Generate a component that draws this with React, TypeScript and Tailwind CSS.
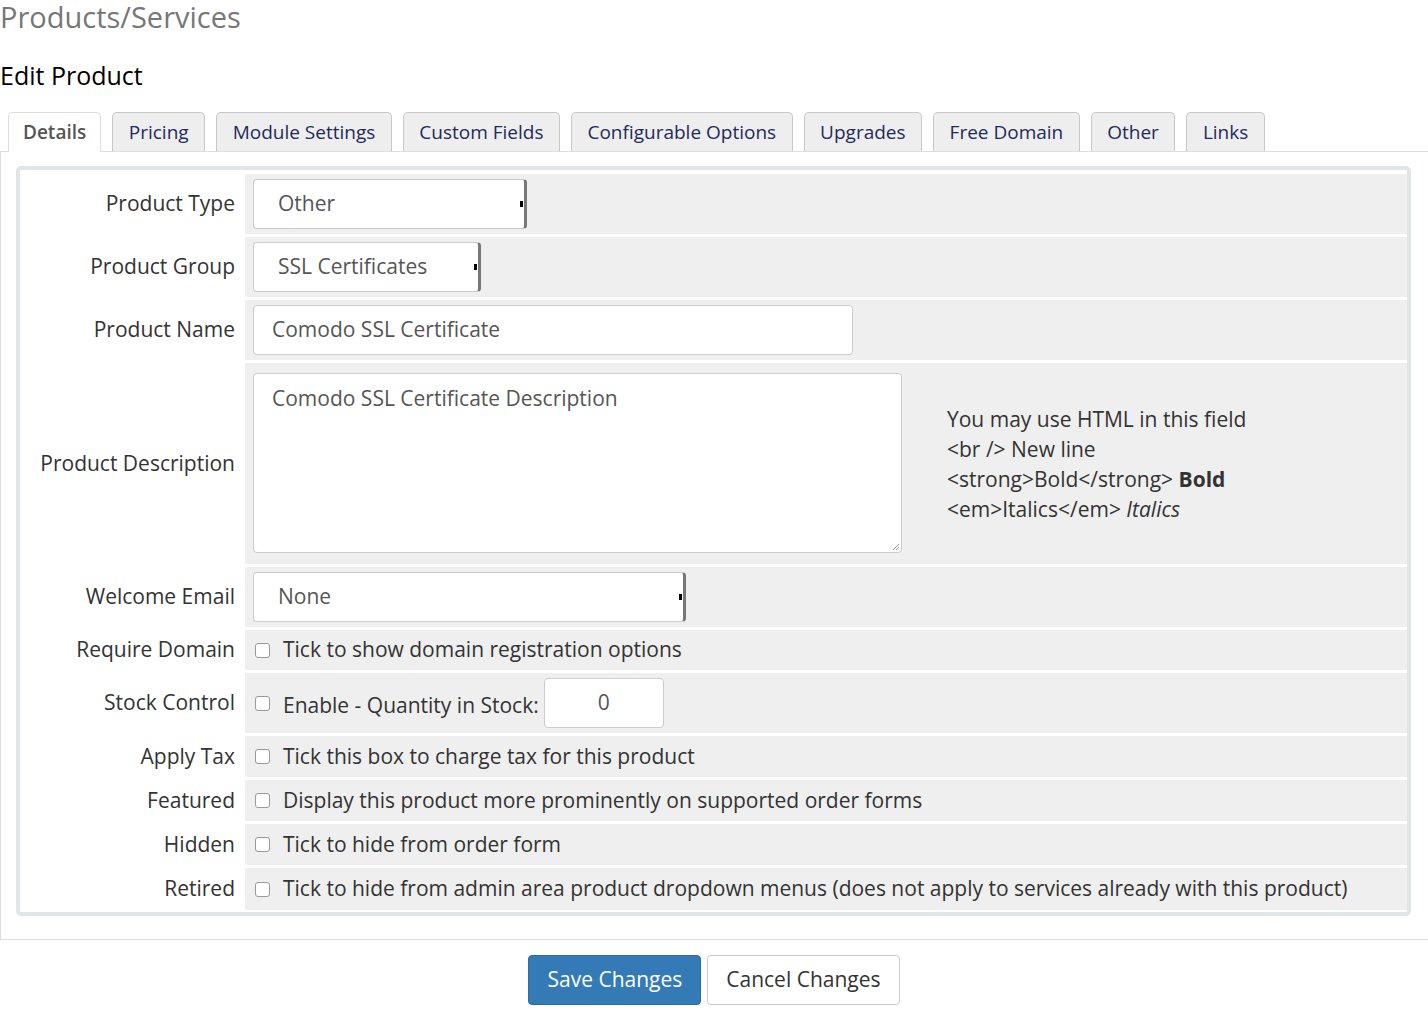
import React from "react";

const tabs = [
  "Details",
  "Pricing",
  "Module Settings",
  "Custom Fields",
  "Configurable Options",
  "Upgrades",
  "Free Domain",
  "Other",
  "Links",
];

function FakeSelect({ value, width }: { value: string; width: string }) {
  return (
    <div
      className={`relative flex h-[50px] items-center rounded-[4px] border border-[#ccc] border-r-[3px] border-r-[#777] bg-white pl-[24px] text-[#555] ${width}`}
    >
      <span>{value}</span>
      <span className="absolute right-[1px] top-[21px] h-[6px] w-[3px] bg-black" />
    </div>
  );
}

function Check() {
  return (
    <span className="inline-block h-[15px] w-[15px] shrink-0 rounded-[3px] border border-[#9a9a9a] bg-white" />
  );
}

function Row({
  label,
  children,
  h,
}: {
  label: string;
  children: React.ReactNode;
  h: string;
}) {
  return (
    <div className={`flex ${h}`}>
      <div className="flex w-[225px] shrink-0 items-center justify-end pr-[10px] text-[#333]">
        {label}
      </div>
      <div className="flex flex-1 items-center bg-[#efefef] pl-[8px]">{children}</div>
    </div>
  );
}

function CheckRow({ label, text, h }: { label: string; text: string; h: string }) {
  return (
    <Row label={label} h={h}>
      <div className="flex items-center gap-[13px] pl-[2px] text-[#333]">
        <Check />
        <span>{text}</span>
      </div>
    </Row>
  );
}

export default function App() {
  return (
    <div
      className="min-h-[1020px] w-[1428px] overflow-hidden bg-white text-[21px] text-[#333]"
      style={{ fontFamily: '"Open Sans", "Noto Sans", sans-serif' }}
    >
      <h1 className="text-[29px] leading-[34px] text-[#777]">Products/Services</h1>
      <h2 className="mt-[26px] text-[25px] leading-[30px] text-black">Edit Product</h2>

      {/* Tabs */}
      <div className="mt-[22px] flex items-end gap-[11px] pl-[8px]">
        {tabs.map((t, i) =>
          i === 0 ? (
            <div
              key={t}
              className="relative z-10 mb-[-1px] flex h-[40px] items-center rounded-t-[5px] border border-b-0 border-[#ddd] bg-white px-[14px] text-[19px] font-semibold text-[#555]"
            >
              {t}
            </div>
          ) : (
            <div
              key={t}
              className="flex h-[39px] items-center rounded-t-[5px] border border-b-0 border-[#c8c8c8] bg-[#eee] px-[15.5px] text-[19px] text-[#1e2a5a]"
            >
              {t}
            </div>
          )
        )}
      </div>

      {/* Tab panel */}
      <div className="border-b border-l border-t border-[#ddd] pb-[23px] pl-[15px] pr-[17px] pt-[14px]">
        <div className="flex flex-col gap-[3px] rounded-[5px] border-4 border-[#e0e6e8] bg-white pb-[2px] pt-[4px]">
          <Row label="Product Type" h="h-[60px]">
            <FakeSelect value="Other" width="w-[274px]" />
          </Row>
          <Row label="Product Group" h="h-[60px]">
            <FakeSelect value="SSL Certificates" width="w-[228px]" />
          </Row>
          <Row label="Product Name" h="h-[60px]">
            <div className="flex h-[50px] w-[600px] items-center rounded-[4px] border border-[#ccc] bg-white pl-[18px] text-[#555]">
              Comodo SSL Certificate
            </div>
          </Row>
          <Row label="Product Description" h="h-[201px]">
            <div className="relative mb-[2px] h-[180px] w-[649px] rounded-[4px] border border-[#ccc] bg-white pl-[18px] pt-[9px] text-[#555]">
              Comodo SSL Certificate Description
              <svg className="absolute bottom-[1px] right-[1px]" width="8" height="8" viewBox="0 0 8 8">
                <path d="M7 1L1 7M7 4L4 7" stroke="#999" strokeWidth="1" />
              </svg>
            </div>
            <div className="ml-[45px] leading-[30px] text-[#333]">
              <div>You may use HTML in this field</div>
              <div>&lt;br /&gt; New line</div>
              <div>
                &lt;strong&gt;Bold&lt;/strong&gt; <strong className="font-bold">Bold</strong>
              </div>
              <div>
                &lt;em&gt;Italics&lt;/em&gt; <em>Italics</em>
              </div>
            </div>
          </Row>
          <Row label="Welcome Email" h="h-[60px]">
            <FakeSelect value="None" width="w-[433px]" />
          </Row>
          <CheckRow label="Require Domain" text="Tick to show domain registration options" h="h-[40px]" />
          <Row label="Stock Control" h="h-[60px]">
            <div className="flex items-center gap-[13px] pl-[2px] text-[#333]">
              <Check />
              <span className="mt-[5px]">Enable - Quantity in Stock:</span>
            </div>
            <div className="ml-[5px] flex h-[50px] w-[120px] items-center justify-center rounded-[4px] border border-[#ccc] bg-white text-[#555]">
              0
            </div>
          </Row>
          <CheckRow label="Apply Tax" text="Tick this box to charge tax for this product" h="h-[41px]" />
          <CheckRow
            label="Featured"
            text="Display this product more prominently on supported order forms"
            h="h-[41px]"
          />
          <CheckRow label="Hidden" text="Tick to hide from order form" h="h-[41px]" />
          <CheckRow
            label="Retired"
            text="Tick to hide from admin area product dropdown menus (does not apply to services already with this product)"
            h="h-[42px]"
          />
        </div>
      </div>

      {/* Buttons */}
      <div className="mt-[15px] flex justify-center gap-[6px]">
        <button className="h-[50px] rounded-[4px] border border-[#2e6da4] bg-[#337ab7] px-[18px] text-[21px] text-white">
          Save Changes
        </button>
        <button className="h-[50px] rounded-[4px] border border-[#ccc] bg-white px-[18px] text-[21px] text-[#333]">
          Cancel Changes
        </button>
      </div>
    </div>
  );
}
